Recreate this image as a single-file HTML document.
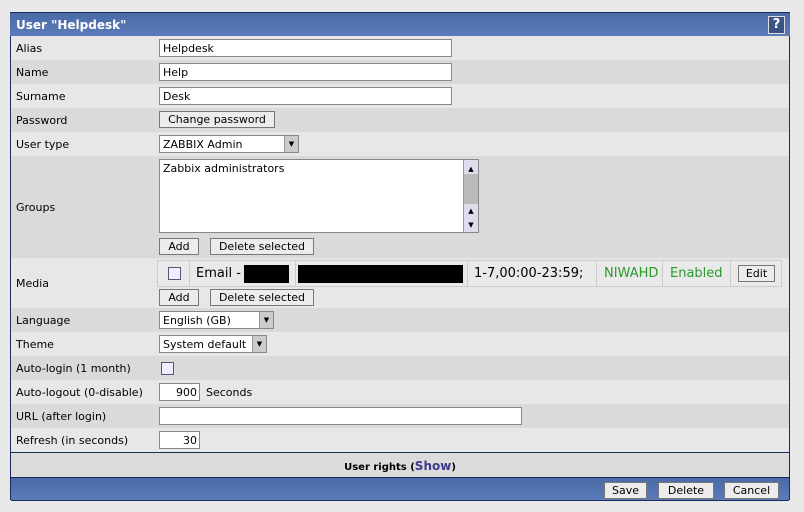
<!DOCTYPE html>
<html><head><style>
body{margin:0;width:804px;height:512px;background:#e8e8e8;font-family:"DejaVu Sans","Liberation Sans",sans-serif;font-size:11px;color:#000;position:relative;overflow:hidden}
.frame{position:absolute;left:10px;top:12px;width:778px;height:487px;border:1px solid #1a2a5a;border-top:none;background:#e4e4e4}
.hdr{position:absolute;left:10px;top:12px;width:780px;height:23px;background:linear-gradient(#4a6aa8,#5a7ab8);color:#fff;font-weight:bold;font-size:12px;line-height:24px;border-top:1px solid #1a2a5a}
.hdr span{margin-left:6px}
.help{position:absolute;right:5px;top:3px;width:15px;height:16px;border:1px solid #ddd;background:#3a5488;color:#fff;text-align:center;line-height:16px;font-size:13px}
.row{position:absolute;left:11px;width:778px}
.row.a{background:#e7e7e7}.row.b{background:#dadada}
.lbl{position:absolute;left:5px;top:1px}
.in{position:absolute;background:#fff;border:1px solid #888;box-sizing:border-box;height:18px;line-height:18px;padding-left:3px}
.btn{position:absolute;background:#ececec;border:1px solid #777;box-sizing:border-box;height:17px;line-height:16px;text-align:center}
.sel .arr{position:absolute;right:0;top:0;width:13px;height:16px;background:#ccc;border-left:1px solid #999;font-size:7px;text-align:center;line-height:16px}
.g{color:#2a9a2a}
.sep{position:absolute;top:0;width:1px;height:25px;background:#ccc}
</style></head><body>
<div class="frame"></div>
<div class="hdr"><span>User "Helpdesk"</span><div class="help">?</div></div>

<div class="row a" style="top:36px;height:24px;line-height:24px"><span class="lbl">Alias</span><div class="in" style="left:148px;top:3px;width:293px">Helpdesk</div></div>
<div class="row b" style="top:60px;height:24px;line-height:24px"><span class="lbl">Name</span><div class="in" style="left:148px;top:3px;width:293px">Help</div></div>
<div class="row a" style="top:84px;height:24px;line-height:24px"><span class="lbl">Surname</span><div class="in" style="left:148px;top:3px;width:293px">Desk</div></div>
<div class="row b" style="top:108px;height:24px;line-height:24px"><span class="lbl">Password</span><div class="btn" style="left:148px;top:3px;width:116px">Change password</div></div>
<div class="row a" style="top:132px;height:24px;line-height:24px"><span class="lbl">User type</span><div class="in sel" style="left:148px;top:3px;width:140px">ZABBIX Admin<span class="arr">▼</span></div></div>
<div class="row b" style="top:156px;height:102px"><span class="lbl" style="top:45px">Groups</span>
 <div class="in" style="left:148px;top:3px;width:320px;height:74px;line-height:18px">Zabbix administrators
  <div style="position:absolute;right:0;top:0;width:14px;height:72px;background:#bbb;border-left:1px solid #999"><div style="height:14px;background:#dde;font-size:7px;text-align:center">▲</div><div style="position:absolute;bottom:0;width:14px;height:28px;background:#dde;font-size:7px;text-align:center;line-height:14px">▲<br>▼</div></div></div>
 <div class="btn" style="left:148px;top:82px;width:40px">Add</div><div class="btn" style="left:199px;top:82px;width:104px">Delete selected</div></div>
<div class="row a" style="top:258px;height:50px"><span class="lbl" style="top:19px">Media</span>
 <div style="position:absolute;left:146px;top:2px;width:623px;height:25px;background:#e9e9e9;border:1px solid #ccc;font-size:13px;line-height:26px">
  <div style="position:absolute;left:10px;top:6px;width:11px;height:11px;border:1px solid #557;background:#eef"></div>
  <div class="sep" style="left:31px"></div><div class="sep" style="left:137px"></div><div class="sep" style="left:309px"></div><div class="sep" style="left:438px"></div><div class="sep" style="left:504px"></div><div class="sep" style="left:572px"></div>
  <span style="position:absolute;left:38px">Email -</span><div style="position:absolute;left:86px;top:4px;width:45px;height:18px;background:#000"></div>
  <div style="position:absolute;left:140px;top:4px;width:165px;height:18px;background:#000"></div>
  <span style="position:absolute;left:316px">1-7,00:00-23:59;</span>
  <span class="g" style="position:absolute;left:446px">NIWAHD</span><span class="g" style="position:absolute;left:512px">Enabled</span>
  <div class="btn" style="left:580px;top:4px;width:37px;font-size:11px">Edit</div></div>
 <div class="btn" style="left:148px;top:31px;width:40px">Add</div><div class="btn" style="left:199px;top:31px;width:104px">Delete selected</div></div>
<div class="row b" style="top:308px;height:24px;line-height:24px"><span class="lbl">Language</span><div class="in sel" style="left:148px;top:3px;width:115px">English (GB)<span class="arr">▼</span></div></div>
<div class="row a" style="top:332px;height:24px;line-height:24px"><span class="lbl">Theme</span><div class="in sel" style="left:148px;top:3px;width:108px">System default<span class="arr">▼</span></div></div>
<div class="row b" style="top:356px;height:24px;line-height:24px"><span class="lbl">Auto-login (1 month)</span><div style="position:absolute;left:150px;top:6px;width:11px;height:11px;border:1px solid #557;background:#eef"></div></div>
<div class="row a" style="top:380px;height:24px;line-height:24px"><span class="lbl">Auto-logout (0-disable)</span><div class="in" style="left:148px;top:3px;width:41px;text-align:right;padding-right:2px">900</div><span style="position:absolute;left:195px;top:1px">Seconds</span></div>
<div class="row b" style="top:404px;height:24px;line-height:24px"><span class="lbl">URL (after login)</span><div class="in" style="left:148px;top:3px;width:363px"></div></div>
<div class="row a" style="top:428px;height:24px;line-height:24px"><span class="lbl">Refresh (in seconds)</span><div class="in" style="left:148px;top:3px;width:41px;text-align:right;padding-right:2px">30</div></div>
<div class="row" style="top:452px;height:24px;line-height:26px;border-top:1px solid #1a2a5a;background:#dcdcdc;text-align:center;font-weight:bold;font-size:10px">User rights (<span style="color:#3a3a8a;font-size:12px">Show</span>)</div>
<div class="row" style="top:477px;height:22px;background:linear-gradient(#4a6aa8,#5a7ab8);border-top:1px solid #1a2a5a;border-bottom:1px solid #1a2a5a">
 <div class="btn" style="left:593px;top:4px;width:43px">Save</div><div class="btn" style="left:647px;top:4px;width:56px">Delete</div><div class="btn" style="left:713px;top:4px;width:55px">Cancel</div></div>
</body></html>
